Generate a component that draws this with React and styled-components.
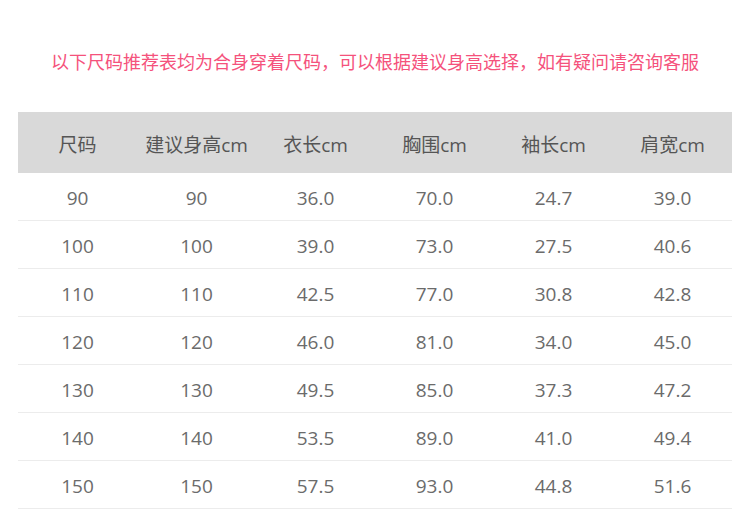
import styled, { createGlobalStyle } from "styled-components";

const GlobalStyle = createGlobalStyle`
  body {
    margin: 0;
    background: #fff;
    font-family: "Open Sans", "Noto Sans CJK SC", sans-serif;
  }
`;

const Page = styled.div`
  width: 750px;
  height: 510px;
  overflow: hidden;
  padding-top: 48px;
  box-sizing: border-box;
`;

const Notice = styled.p`
  margin: 0 0 36px;
  text-align: center;
  color: #f5527c;
  font-size: 18px;
  line-height: 28px;
`;

const Table = styled.div`
  margin: 0 18px;
  width: 714px;
`;

const Row = styled.div`
  display: grid;
  grid-template-columns: repeat(6, 1fr);
  align-items: center;
  height: ${(p) => (p.$head ? "61px" : "48px")};
  background: ${(p) => (p.$head ? "#d9d9d9" : "transparent")};
  border-bottom: ${(p) => (p.$head ? "none" : "1px solid #ececec")};
  box-sizing: border-box;
`;

const Cell = styled.div`
  text-align: center;
  font-size: 19px;
  color: ${(p) => (p.$head ? "#555" : "#6b6b6b")};
  padding-top: ${(p) => (p.$head ? "2px" : "2px")};
`;

const head = ["尺码", "建议身高cm", "衣长cm", "胸围cm", "袖长cm", "肩宽cm"];
const rows = [
  ["90", "90", "36.0", "70.0", "24.7", "39.0"],
  ["100", "100", "39.0", "73.0", "27.5", "40.6"],
  ["110", "110", "42.5", "77.0", "30.8", "42.8"],
  ["120", "120", "46.0", "81.0", "34.0", "45.0"],
  ["130", "130", "49.5", "85.0", "37.3", "47.2"],
  ["140", "140", "53.5", "89.0", "41.0", "49.4"],
  ["150", "150", "57.5", "93.0", "44.8", "51.6"],
];

export default function App() {
  return (
    <Page>
      <GlobalStyle />
      <Notice>以下尺码推荐表均为合身穿着尺码，可以根据建议身高选择，如有疑问请咨询客服</Notice>
      <Table>
        <Row $head>
          {head.map((h) => (
            <Cell $head key={h}>{h}</Cell>
          ))}
        </Row>
        {rows.map((r) => (
          <Row key={r[0]}>
            {r.map((v, i) => (
              <Cell key={i}>{v}</Cell>
            ))}
          </Row>
        ))}
      </Table>
    </Page>
  );
}
